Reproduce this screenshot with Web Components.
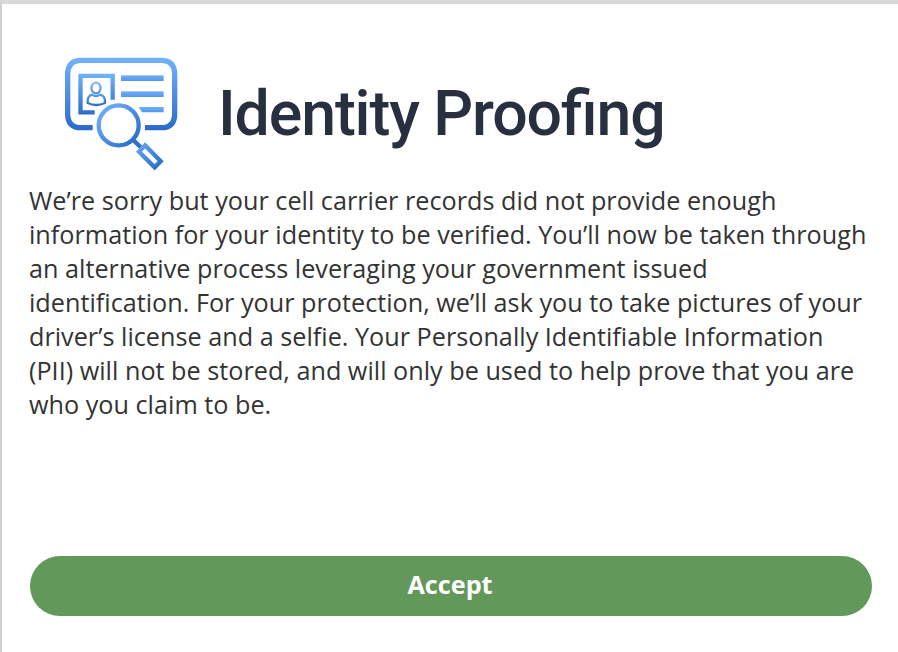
<!DOCTYPE html>
<html lang="en">
<head>
<meta charset="utf-8">
<title>Identity Proofing</title>
<style>
html, body { margin: 0; height: 100%; background: #fff; }
body { overflow: hidden; font-family: "Open Sans", "Noto Sans", sans-serif; color: #333; }
</style>
</head>
<body>
<proofing-card>
  <proofing-header slot="header">Identity Proofing</proofing-header>
  <proofing-message>We’re sorry but your cell carrier records did not provide enough<br>information for your identity to be verified. You’ll now be taken through<br>an alternative process leveraging your government issued<br>identification. For your protection, we’ll ask you to take pictures of your<br>driver’s license and a selfie. Your Personally Identifiable Information<br>(PII) will not be stored, and will only be used to help prove that you are<br>who you claim to be.</proofing-message>
  <pill-button slot="action">Accept</pill-button>
</proofing-card>
<script>
class Base extends HTMLElement {
  constructor() {
    super();
    this.attachShadow({ mode: 'open' }).innerHTML = this.constructor.markup;
  }
}

customElements.define('identity-icon', class extends Base {
  static markup = `
    <style>:host { display: block; flex: none; width: 140px; height: 135px; } svg { display: block; }</style>
    <svg width="140" height="135" viewBox="0 0 420 405" fill="none" aria-hidden="true">
      <defs>
        <linearGradient id="card" gradientUnits="userSpaceOnUse" x1="0" y1="38" x2="0" y2="256"><stop stop-color="#72b2fa"/><stop offset="1" stop-color="#2a6bca"/></linearGradient>
        <linearGradient id="photo" gradientUnits="userSpaceOnUse" x1="0" y1="86" x2="0" y2="210"><stop stop-color="#72b2fa"/><stop offset="1" stop-color="#2a6bca"/></linearGradient>
        <linearGradient id="head" gradientUnits="userSpaceOnUse" x1="0" y1="110" x2="0" y2="148"><stop stop-color="#8abff9"/><stop offset="1" stop-color="#4a8ce2"/></linearGradient>
        <linearGradient id="bust" gradientUnits="userSpaceOnUse" x1="0" y1="145" x2="0" y2="184"><stop stop-color="#5b9ff0"/><stop offset="1" stop-color="#2a6bca"/></linearGradient>
        <linearGradient id="lens" gradientUnits="userSpaceOnUse" x1="150" y1="190" x2="258" y2="294"><stop stop-color="#72b2fa"/><stop offset="1" stop-color="#2a6bca"/></linearGradient>
        <linearGradient id="grip" gradientUnits="userSpaceOnUse" x1="262" y1="300" x2="336" y2="366"><stop stop-color="#62a5f3"/><stop offset="1" stop-color="#2a6bca"/></linearGradient>
        <linearGradient id="bar" x1="0" y1="0" x2="0" y2="1"><stop stop-color="#6db0f8"/><stop offset="1" stop-color="#5496ea"/></linearGradient>
      </defs>
      <path d="M128 248H94Q53 248 53 206V88Q53 46 94 46H333Q374 46 374 88V206Q374 248 333 248H285" stroke="url(#card)" stroke-width="16"/>
      <path d="M134 202H91.500V92.500H188V164" stroke="url(#photo)" stroke-width="13"/>
      <ellipse cx="138" cy="129" rx="13.500" ry="16" stroke="url(#head)" stroke-width="7"/>
      <path d="M126 149Q113 153 113 168V174Q126 180 139 180Q152 180 165 174V168Q165 153 150 149Q138 158 126 149Z" stroke="url(#bust)" stroke-width="7" stroke-linejoin="round"/>
      <rect x="213" y="91" width="128" height="17" fill="url(#bar)"/>
      <rect x="213" y="139" width="128" height="17" fill="url(#bar)"/>
      <path d="M266 186H341V202H276Z" fill="url(#bar)"/>
      <circle cx="206" cy="241" r="60" stroke="url(#lens)" stroke-width="13"/>
      <path d="M249 284L272 307" stroke="#2f70ce" stroke-width="13"/>
      <path d="M285 301L332 349L314 367L267 320Z" stroke="url(#grip)" stroke-width="13"/>
    </svg>`;
});

customElements.define('proofing-header', class extends Base {
  static markup = `
    <style>
      :host { display: flex; padding-left: 21px; }
      h1 { margin: 19px 0 0 28px; font: 500 62.6px/100px Roboto, sans-serif; color: #28303f; white-space: nowrap; letter-spacing: -1.12px; font-feature-settings: "liga" 1; }
    </style>
    <identity-icon></identity-icon><h1><slot></slot></h1>`;
});

customElements.define('proofing-message', class extends Base {
  static markup = `
    <style>:host { display: block; font-size: 25.2px; line-height: 34px; white-space: nowrap; letter-spacing: 0.015px; }</style>
    <slot></slot>`;
});

customElements.define('pill-button', class extends Base {
  static markup = `
    <style>
      :host { display: block; }
      button { display: block; width: 100%; height: 60px; padding: 0 2px 4px 0; border: 0; border-radius: 30px; background: #62995a; color: #fff; font: 700 25.2px/34px "Open Sans", sans-serif; }
    </style>
    <button type="button"><slot></slot></button>`;
});

customElements.define('proofing-card', class extends Base {
  static markup = `
    <style>
      :host { display: flex; flex-direction: column; box-sizing: border-box; height: 652px; border-top: 4px solid #d9d9d9; border-left: 2px solid #cfcfcf; padding: 41px 26px 36px 27px; }
      main { padding-top: 3px; }
      footer { margin-top: auto; padding-left: 1px; }
    </style>
    <slot name="header"></slot>
    <main><slot></slot></main>
    <footer><slot name="action"></slot></footer>`;
});
</script>
</body>
</html>
